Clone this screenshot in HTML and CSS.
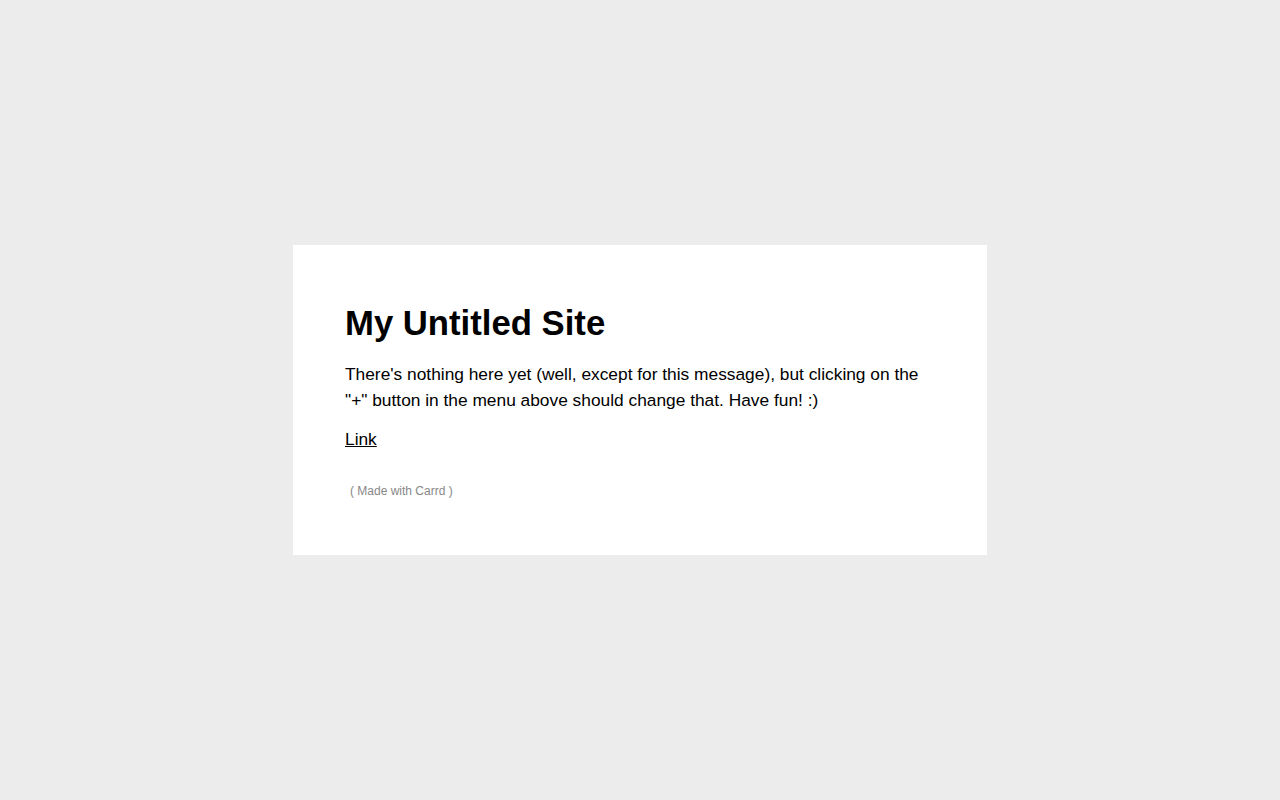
FILE: index.html
```html
<!DOCTYPE html>
<html lang="en">
<head>
<meta charset="utf-8">
<title>My Untitled Site</title>
<link rel="stylesheet" href="styles.css">
</head>
<body>
<main class="page">
  <section class="card">
    <h1 class="title">My Untitled Site</h1>
    <p class="text">There's nothing here yet (well, except for this message), but clicking on the "+" button in the menu above should change that. Have fun! :)</p>
    <p class="text"><a class="link" href="#">Link</a></p>
    <p class="credit">( Made with Carrd )</p>
  </section>
</main>
</body>
</html>
```

FILE: styles.css
```css
html, body {
  margin: 0;
  padding: 0;
  height: 100%;
}
body {
  background: #ececec;
  font-family: "Liberation Sans", Arial, sans-serif;
  color: #000;
}
.page {
  min-height: 100vh;
  display: flex;
  align-items: center;
  justify-content: center;
}
.card {
  box-sizing: border-box;
  width: 694px;
  height: 310px;
  background: #fff;
  padding: 52px 52px;
}
.title {
  margin: 0 0 12px 0;
  font-size: 34.7px;
  line-height: 52px;
  font-weight: 700;
}
.text {
  margin: 0 0 13px 0;
  font-size: 17.34px;
  line-height: 26px;
}
.link {
  color: #000;
  text-decoration: underline;
}
.credit {
  margin: 31px 0 0 5px;
  font-size: 12px;
  line-height: 16px;
  color: #888;
}
```
